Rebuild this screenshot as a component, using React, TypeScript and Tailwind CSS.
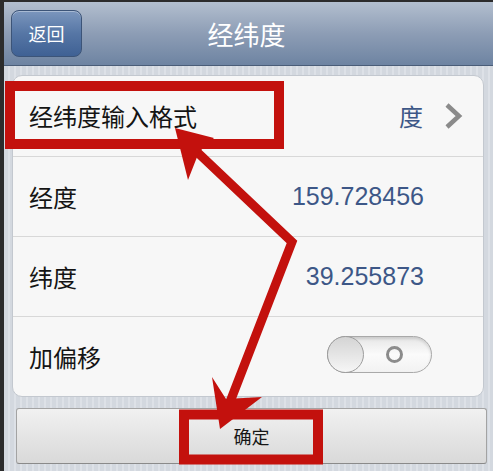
import { useState } from "react";

const rows = [
  { label: "经度", value: "159.728456" },
  { label: "纬度", value: "39.255873" },
];

const Toggle = ({ on, onClick }: { on: boolean; onClick: () => void }) => {
  return (
    <button
      onClick={onClick}
      className="relative w-[105px] h-[37px] rounded-full border border-[#a9a9a9] bg-gradient-to-b from-[#e6e6e6] via-[#fbfbfb] to-[#f2f2f2] shadow-[inset_0_2px_3px_rgba(0,0,0,0.12)]"
    >
      {/* O mark */}
      <span className="absolute left-[58px] top-[9px] w-[17px] h-[17px] rounded-full border-[3px] border-[#8c8c8c]" />
      {/* knob */}
      <span
        className={
          on
            ? "absolute right-[-1px] top-[-1px] w-[37px] h-[37px] rounded-full border border-[#9d9d9d] bg-gradient-to-b from-[#d4d4d4] to-[#f6f6f6]"
            : "absolute left-[-1px] top-[-1px] w-[37px] h-[37px] rounded-full border border-[#9d9d9d] bg-gradient-to-b from-[#d4d4d4] to-[#f6f6f6]"
        }
      />
    </button>
  );
};

const App = () => {
  const [offset, setOffset] = useState(false);

  return (
    <div
      className="relative w-[493px] h-[471px] overflow-hidden border-l-[4px] border-[#2c2c2c] bg-[repeating-linear-gradient(90deg,#d3d8df_0px,#d3d8df_4px,#dde1e7_4px,#dde1e7_6px)]"
      style={{ fontFamily: '"Noto Sans CJK SC", "Noto Sans", sans-serif' }}
    >
      {/* Nav bar */}
      <div className="grid grid-cols-[1fr_auto_1fr] items-center h-[66px] px-[7px] border-t-[2px] border-[#2c2c2c] border-b border-b-[#4a5d78] bg-gradient-to-b from-[#b3bfcf] via-[#8d9db5] to-[#6e84a2]">
        <div>
          <button className="w-[71px] h-[47px] rounded-[8px] border border-[#3c5478] bg-gradient-to-b from-[#7b96bd] via-[#5676a5] to-[#3f6194] text-white text-[18px] shadow-[inset_0_1px_0_rgba(255,255,255,0.35)]">
            返回
          </button>
        </div>
        <div className="text-white text-[26px] leading-none pr-[4px]">经纬度</div>
        <div />
      </div>

      {/* Card */}
      <div className="ml-[8px] mt-[9px] w-[472px] h-[322px] rounded-[10px] border border-[#c3c8cf] bg-[#f7f7f7] flex flex-col overflow-hidden">
        <div className="flex items-center h-[81px] pl-[16px] pr-[20px] border-b border-[#d8d8d8]">
          <span className="text-[24px] text-[#141414]">经纬度输入格式</span>
          <span className="ml-auto text-[24px] text-[#3d5787]">度</span>
          <svg width="19" height="28" viewBox="0 0 19 28" className="ml-[21px]">
            <path d="M3 3 L15 14 L3 25" fill="none" stroke="#8b8b8b" strokeWidth="4.5" />
          </svg>
        </div>
        {rows.map((r) => (
          <div
            key={r.label}
            className="flex items-center h-[80px] pl-[16px] pr-[59px] border-b border-[#d8d8d8]"
          >
            <span className="text-[24px] text-[#141414]">{r.label}</span>
            <span
              className="ml-auto text-[25px] text-[#3d5787]"
              style={{ fontFamily: '"Liberation Sans", sans-serif' }}
            >
              {r.value}
            </span>
          </div>
        ))}
        <div className="flex items-center flex-1 pl-[16px] pr-[51px]">
          <span className="text-[24px] text-[#141414]">加偏移</span>
          <div className="ml-auto">
            <Toggle on={offset} onClick={() => setOffset(!offset)} />
          </div>
        </div>
      </div>

      {/* Confirm button */}
      <button className="ml-[12px] mt-[11px] w-[471px] h-[56px] rounded-[3px] border border-[#a3a3a3] border-b-[#8a8a8a] bg-gradient-to-b from-[#f1f1f1] to-[#d9d9d9] text-[18px] text-[#161616]">
        确定
      </button>

      {/* Red annotations */}
      <svg
        className="absolute left-[-4px] top-0 pointer-events-none"
        width="493"
        height="471"
        viewBox="0 0 493 471"
      >
        <rect x="10" y="86" width="269" height="58" fill="none" stroke="#c3110d" strokeWidth="10" />
        <rect x="184" y="414.5" width="134" height="45" fill="none" stroke="#c3110d" strokeWidth="10" />
        <polyline
          points="196,151 292,242 230,402"
          fill="none"
          stroke="#c3110d"
          strokeWidth="9"
          strokeLinejoin="miter"
        />
        <polygon points="175,128 214,138 199,152 188,180" fill="#c3110d" />
        <polygon points="220,429 212,377 226,399 262,397" fill="#c3110d" />
      </svg>
    </div>
  );
};

export default App;
